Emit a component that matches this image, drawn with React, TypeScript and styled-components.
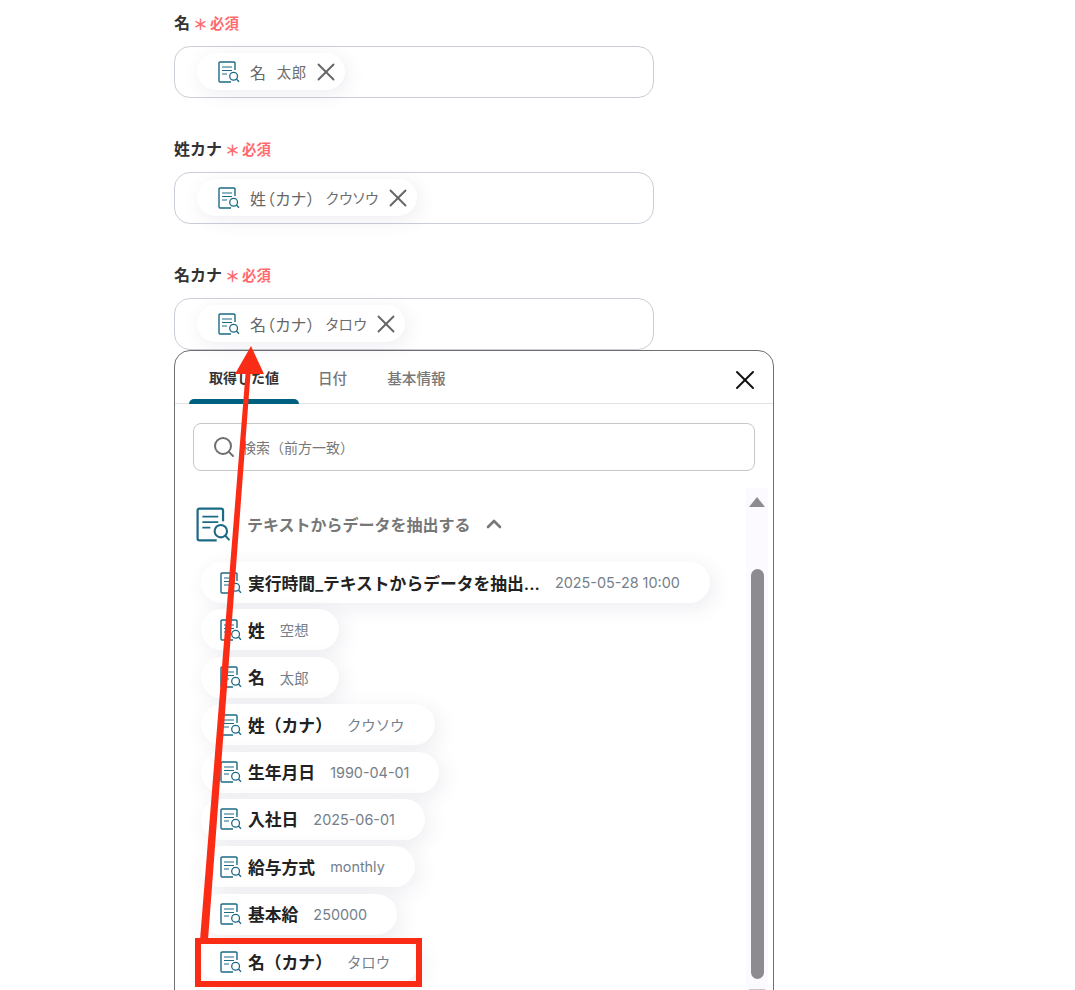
import React from "react";
import styled, { createGlobalStyle } from "styled-components";
import { X, Search, ChevronUp } from "lucide-react";

const FONT = `Inter, "Noto Sans CJK JP", "Noto Sans", sans-serif`;

const GlobalStyle = createGlobalStyle`
  html, body {
    margin: 0;
    height: 990px;
    overflow: hidden;
    background: #fff;
    font-family: ${FONT};
  }
  * { box-sizing: border-box; }
`;

const Page = styled.div`
  position: relative;
  width: 1075px;
  height: 990px;
  overflow: hidden;
  padding: 10px 0 0 174px;
`;

const FieldStack = styled.div`
  display: flex;
  flex-direction: column;
  gap: 38px;
  width: 480px;
`;

const LabelRow = styled.div`
  display: flex;
  align-items: center;
  height: 24px;
  margin-bottom: 12px;
  font-size: 16px;
  font-weight: 600;
  color: #333;
`;

const Star = styled.span`
  margin-left: 3px;
  font-size: 15px;
  font-weight: 700;
  line-height: 1;
  color: #ff6a6f;
  padding-top: 4px;
`;

const Required = styled.span`
  margin-left: 2px;
  font-size: 14.4px;
  font-weight: 600;
  color: #ff6a6f;
`;

const InputBox = styled.div`
  height: 52px;
  border: 1px solid #c9ced8;
  border-radius: 16px;
  background: #fff;
  padding: 6px 0 0 22px;
`;

const InputChip = styled.div`
  display: inline-flex;
  align-items: center;
  height: 37px;
  padding: 0 4px 0 21px;
  border-radius: 19px;
  background: #fff;
  box-shadow: 3px 4px 18px rgba(90, 80, 130, 0.1);
  color: #666;
`;

const InputChipName = styled.span`
  margin-left: 10px;
  font-size: 16px;
  letter-spacing: 0.7px;
  font-feature-settings: "palt";
`;

const InputChipValue = styled.span`
  margin-left: 10px;
  font-size: 14.4px;
  letter-spacing: 0.6px;
  color: #6d6d6d;
  font-feature-settings: "palt";
`;

const RemoveIcon = styled(X)`
  margin-left: 4px;
  color: #666;
`;

const Panel = styled.div`
  width: 600px;
  height: 700px;
  border: 1px solid #6f6f6f;
  border-radius: 16px;
  background: #fff;
`;

const TabBar = styled.div`
  display: flex;
  align-items: flex-end;
  height: 53px;
  padding-left: 14px;
  border-bottom: 1px solid #e3e3e3;
  position: relative;
`;

const Tab = styled.div<{ $active?: boolean }>`
  position: relative;
  width: ${(p) => (p.$active ? "110px" : "auto")};
  height: 100%;
  margin-right: ${(p) => (p.$active ? "19px" : "40px")};
  display: flex;
  align-items: center;
  justify-content: center;
  font-size: ${(p) => (p.$active ? "14px" : "14.6px")};
  font-weight: ${(p) => (p.$active ? 600 : 500)};
  color: ${(p) => (p.$active ? "#333" : "#777")};

  &::after {
    content: "";
    display: ${(p) => (p.$active ? "block" : "none")};
    position: absolute;
    left: 0;
    right: 0;
    bottom: -1px;
    height: 5px;
    border-radius: 5px 5px 0 0;
    background: #00607f;
  }
`;

const CloseButton = styled(X)`
  position: absolute;
  right: 12px;
  top: 13px;
  color: #111;
`;

const SearchBox = styled.div`
  display: flex;
  align-items: center;
  height: 48px;
  margin: 19px 18px 0 18px;
  padding-left: 18px;
  border: 1px solid #c8c8c8;
  border-radius: 8px;
  font-size: 14px;
  color: #777;
`;

const SearchIcon = styled(Search)`
  flex: none;
  color: #6f6f6f;
  margin-right: 6px;
`;

const Body = styled.div`
  display: flex;
  justify-content: space-between;
  margin-top: 17px;
`;

const ListArea = styled.div`
  padding: 17px 0 0 21px;
  flex: 1;
`;

const GroupHeader = styled.div`
  display: flex;
  align-items: center;
  height: 38px;
  margin-bottom: 19px;
  font-size: 16px;
  font-weight: 600;
  color: #777;
`;

const GroupName = styled.span`
  margin-left: 16px;
`;

const GroupChevron = styled(ChevronUp)`
  margin-left: 11px;
  color: #777;
`;

const ChipList = styled.div`
  display: flex;
  flex-direction: column;
  align-items: flex-start;
  gap: 6.4px;
  padding-left: 5px;
`;

const ValueChip = styled.div`
  display: flex;
  align-items: center;
  height: 41px;
  padding: 0 30px 0 19px;
  border-radius: 21px;
  background: #fff;
  box-shadow: 4px 5px 20px rgba(90, 80, 130, 0.11);
  flex: none;
`;

const ChipName = styled.span`
  margin-left: 6px;
  font-size: 16.8px;
  font-weight: 600;
  color: #222;
  white-space: nowrap;
`;

const ChipValue = styled.span`
  margin-left: 15px;
  font-size: 14.4px;
  color: #75808a;
  white-space: nowrap;
`;

const ScrollTrack = styled.div`
  flex: none;
  width: 22px;
  margin-right: 5px;
  background: #fcfafe;
  height: 620px;
  display: flex;
  flex-direction: column;
  align-items: center;
  padding-top: 9px;
`;

const ScrollUp = styled.div`
  width: 0;
  height: 0;
  border-left: 8px solid transparent;
  border-right: 8px solid transparent;
  border-bottom: 10px solid #8e8b90;
`;

const ScrollThumb = styled.div`
  width: 13px;
  height: 410px;
  margin-top: 62px;
  border-radius: 7px;
  background: #8e8b90;
`;

const ScrollDown = styled.div`
  width: 16px;
  height: 10px;
  margin-top: 10px;
  background: #c9c7ca;
`;

const RedBox = styled.div`
  position: absolute;
  left: 195px;
  top: 938px;
  width: 227px;
  height: 49px;
  border: 6px solid #fb2c16;
`;

const ArrowLayer = styled.svg`
  position: absolute;
  left: 0;
  top: 0;
  pointer-events: none;
`;

function DocSearchIcon({ size = 22 }: { size?: number }) {
  return (
    <svg width={size} height={size} viewBox="0 0 22 22" fill="none" style={{ flex: "none" }}>
      <path
        d="M17 9V2.2C17 1.500 16.500 1 15.800 1H2.200C1.500 1 1 1.500 1 2.200V19.800C1 20.500 1.500 21 2.200 21H13"
        stroke="#1c6a85"
        strokeWidth="1.4"
      />
      <path d="M4 6H14M4 9.500H14M4 13H9" stroke="#1c6a85" strokeWidth="1.100" />
      <circle cx="15.600" cy="15.200" r="3.900" fill="#fff" stroke="#1c6a85" strokeWidth="1.300" />
      <path d="M18.400 18L21 20.800" stroke="#1c6a85" strokeWidth="1.300" />
    </svg>
  );
}

const fields = [
  { label: "名", name: "名", value: "太郎" },
  { label: "姓カナ", name: "姓（カナ）", value: "クウソウ" },
  { label: "名カナ", name: "名（カナ）", value: "タロウ" },
];

const values = [
  { name: "実行時間_テキストからデータを抽出...", value: "2025-05-28 10:00" },
  { name: "姓", value: "空想" },
  { name: "名", value: "太郎" },
  { name: "姓（カナ）", value: "クウソウ" },
  { name: "生年月日", value: "1990-04-01" },
  { name: "入社日", value: "2025-06-01" },
  { name: "給与方式", value: "monthly" },
  { name: "基本給", value: "250000" },
  { name: "名（カナ）", value: "タロウ" },
];

export default function App() {
  return (
    <Page>
      <GlobalStyle />
      <FieldStack>
        {fields.map((f) => (
          <div key={f.label}>
            <LabelRow>
              {f.label}
              <Star>＊</Star>
              <Required>必須</Required>
            </LabelRow>
            <InputBox>
              <InputChip>
                <DocSearchIcon />
                <InputChipName>{f.name}</InputChipName>
                <InputChipValue>{f.value}</InputChipValue>
                <RemoveIcon size={30} strokeWidth={1.5} />
              </InputChip>
            </InputBox>
          </div>
        ))}
      </FieldStack>
      <Panel>
        <TabBar>
          <Tab $active>取得した値</Tab>
          <Tab>日付</Tab>
          <Tab>基本情報</Tab>
          <CloseButton size={32} strokeWidth={1.5} />
        </TabBar>
        <SearchBox>
          <SearchIcon size={24} strokeWidth={2} />
          検索（前方一致）
        </SearchBox>
        <Body>
          <ListArea>
            <GroupHeader>
              <DocSearchIcon size={35} />
              <GroupName>テキストからデータを抽出する</GroupName>
              <GroupChevron size={24} strokeWidth={2.6} />
            </GroupHeader>
            <ChipList>
              {values.map((v) => (
                <ValueChip key={v.name}>
                  <DocSearchIcon />
                  <ChipName>{v.name}</ChipName>
                  <ChipValue>{v.value}</ChipValue>
                </ValueChip>
              ))}
            </ChipList>
          </ListArea>
          <ScrollTrack>
            <ScrollUp />
            <ScrollThumb />
            <ScrollDown />
          </ScrollTrack>
        </Body>
      </Panel>
      <RedBox />
      <ArrowLayer width="1075" height="990" viewBox="0 0 1075 990">
        <path d="M251 346L264 374L250.500 374L208 940L200 940L245.500 374L235 374Z" fill="#fb2c16" />
      </ArrowLayer>
    </Page>
  );
}
